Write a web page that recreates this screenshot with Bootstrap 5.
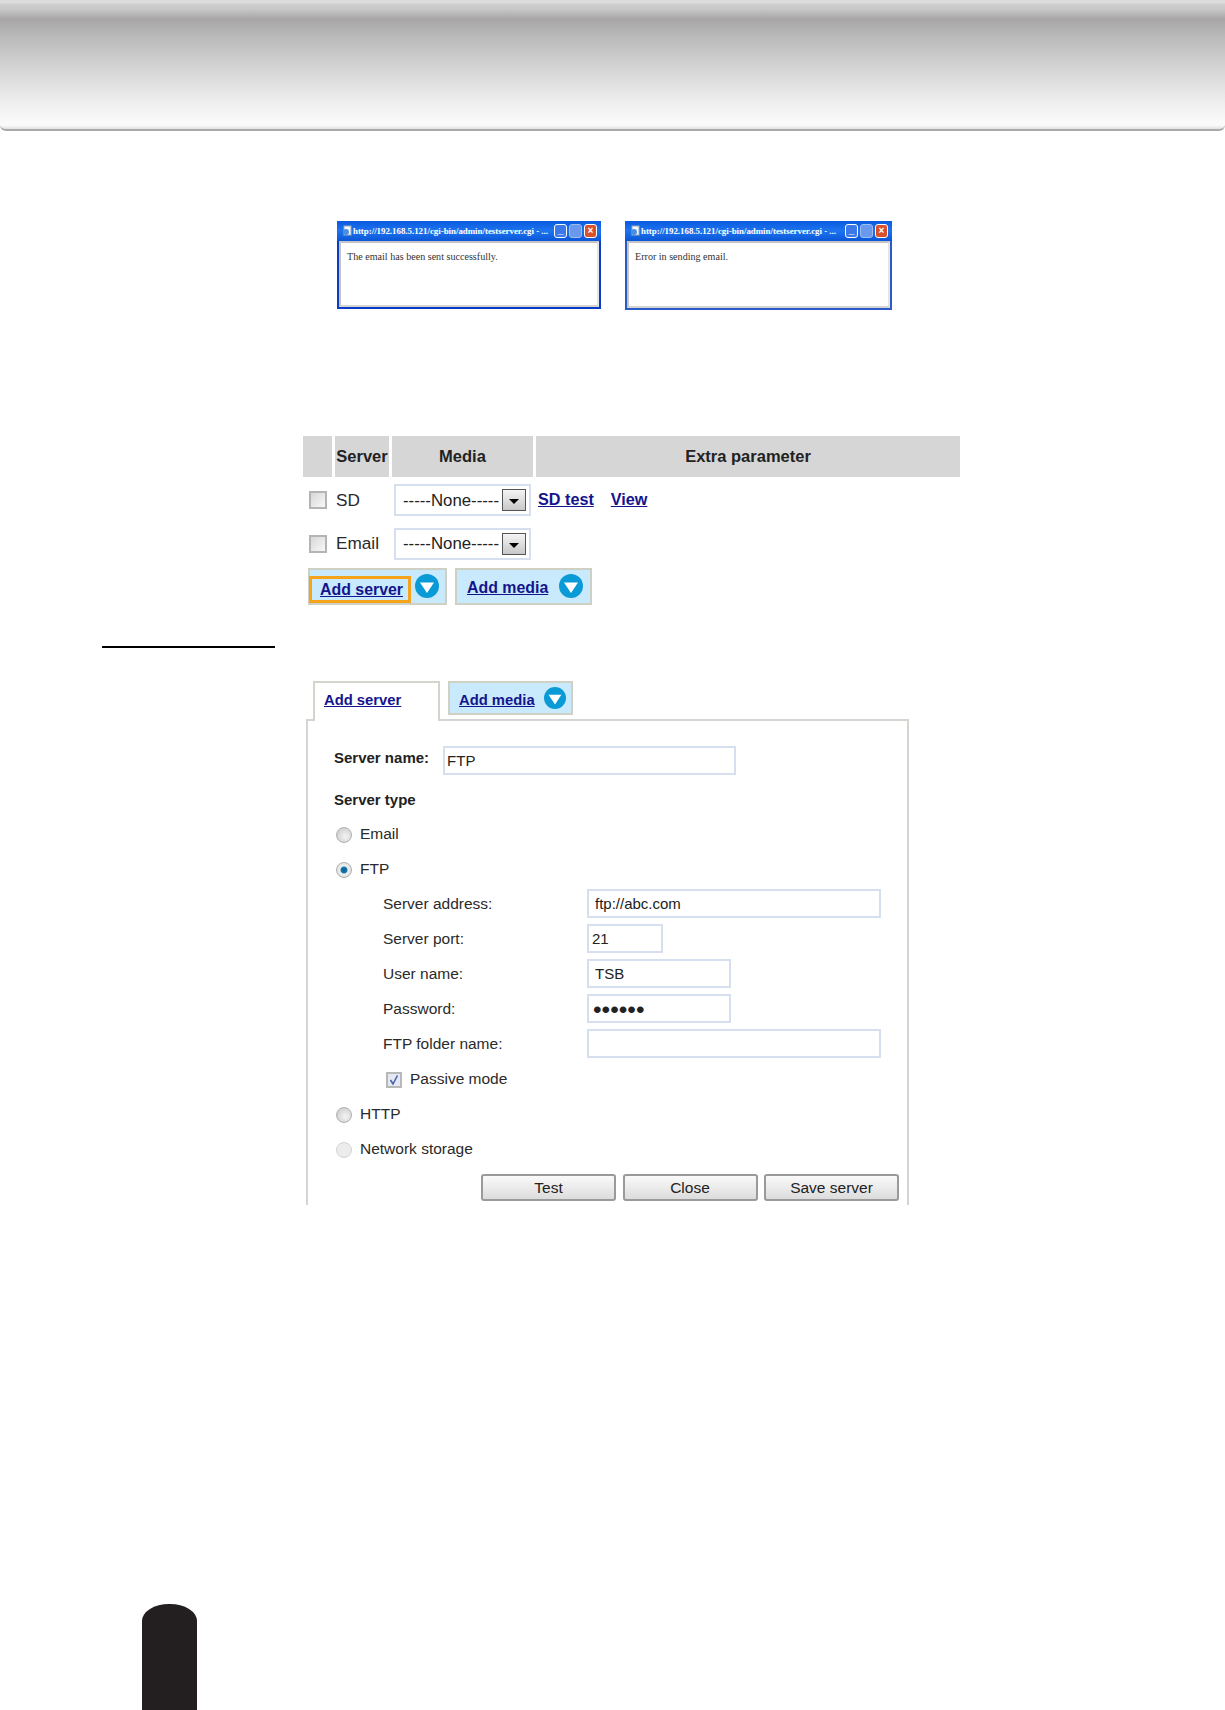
<!DOCTYPE html>
<html lang="en"><head><meta charset="utf-8"><title>Server settings</title>
<link rel="stylesheet" href="https://cdn.jsdelivr.net/npm/bootstrap@5.3.0/dist/css/bootstrap.min.css">
<style>
html,body{height:1710px;overflow:hidden}
body{font-family:"Liberation Sans",Arial,sans-serif;font-size:15.5px;color:#2a2a2a;background:#fff;position:relative;line-height:1.2}
.topband{height:131px;border-bottom:2px solid #a9a9a9;border-radius:0 0 6px 6px;background:linear-gradient(#dcdcdc 0,#dcdcdc 3px,#cfcfcf 4px,#c8c8c8 9px,#a8a6a6 19px,#bdbdbd 40px,#d6d6d6 70px,#f0f0f0 105px,#fbfbfb 125px,#e8e8e8 128px,#cfcfcf 131px)}
.popups{margin:90px 0 0 337px;gap:24px}
.popwin{border:2px solid #0a3cc8;border-top:0;background:#fff;flex:none;display:flex;flex-direction:column}
.popwin-a{width:264px;height:88px}
.popwin-b{width:267px;height:89px;border-color:#2a5ac8}
.poptitle{height:20px;flex:none;background:linear-gradient(#0a5ae0,#1e74ee 50%,#0a55d8);color:#fff;font:bold 8.85px "Liberation Serif",serif;padding:0 4px 0 16px;white-space:nowrap;position:relative;margin:0 -2px}
.pagetitle{flex:1 1 auto;min-width:0;overflow:hidden}
.pageglyph{position:absolute;left:5px;top:4px;width:11px;height:11px}
.winbtn{width:13px;height:14px;border:1px solid #fff;border-radius:3px;background:#3c78e8;flex:none;font:bold 10px/10px "Liberation Sans",sans-serif;color:#fff;text-align:center;margin-left:2px}
.winbtn-x{background:#d8502c;line-height:12px}
.winbtn-dim{background:#6a98ec;border-color:#9dbcf0}
.popbody{flex:1 1 auto;font:10.1px/12px "Liberation Serif",serif;color:#333;padding:8px 6px;border:2px solid #c4c4c4;border-right-color:#e4e4e4;border-bottom-color:#d4d4d4}
.grid-head{gap:3px;height:41px;margin:126px 0 0 303px;width:657px}
.grid-head>div{background:#d6d6d6;font-weight:700;color:#222;display:flex;align-items:center;justify-content:center;font-size:16.5px}
.gh1{width:29px}.gh2{width:54px}.gh3{width:141px}.gh4{width:424px}
.grid-row{margin-left:306px;align-items:center}
.row-sd{height:32px;margin-top:7px}
.row-em{height:31px;margin-top:12px}
.tickbox{appearance:none;width:18px;height:18px;border:2px solid #b4b4b4;background:linear-gradient(135deg,#d8d8d8,#f8f8f8);margin:0 0 0 3px;flex:none;display:block}
.srv-name{width:58px;margin-left:9px;font-size:17.2px}
.selbox{width:137px;height:32px;border:2px solid #d6dfee;padding:0 3px 0 7px;font-size:16.8px;color:#222}
.seltext{margin-top:2px}
.selbtn{width:24px;height:22px;border:1px solid #555;background:linear-gradient(#f4f4f4,#c8c8c8);display:flex;align-items:center;justify-content:center;flex:none}
.selbtn i{display:block;width:0;height:0;border:5px solid transparent;border-top:5px solid #000;border-bottom:0;margin-top:3px}
.blink{color:#14148c;font-weight:700;text-decoration:underline;font-size:16.2px;white-space:nowrap}
.blink-g1{margin-left:7px}.blink-g2{margin-left:17px}
.addrow{margin:9px 0 0 308px;gap:8px;height:37px}
.addrow .blink{font-size:15.9px;margin-top:3px}
.addbtn{background:#c9eafd;border:2px solid #cfd0c4;height:37px;display:flex;align-items:center;flex:none}
.add-a{width:139px}
.add-b{width:137px;padding-left:10px}
.focusring{width:102px;height:27px;margin-left:-1px;border:3px solid #f5a31a;display:flex;align-items:center;padding-left:8px;align-self:flex-end}
.focusring .blink{margin-top:0}
.circ{width:24px;height:24px;flex:none;margin-top:-1px}
.add-a .circ{margin-left:4px}
.add-b .circ{margin-left:11px}
.blackrule{height:2px;width:173px;background:#000;margin:41px 0 0 102px;border:0;opacity:1}
.tabstrip{margin:33px 0 0 313px;height:38px;gap:8px;align-items:flex-start;position:relative;z-index:1}
.tab-on{width:127px;height:40px;background:#fff;border:2px solid #d4d4cc;border-bottom:0;padding:8px 0 0 9px;flex:none}
.tab-off{width:125px;height:34px;background:#c9eafd;border:2px solid #d0d0c4;display:flex;align-items:center;padding-left:9px;flex:none}
.tab-off .tablink{margin-top:5px}
.tab-off .circ{width:22px;height:22px;margin-left:9px;margin-top:0}
.tablink{color:#14148c;font-weight:700;text-decoration:underline;font-size:14.8px;white-space:nowrap}
.panelbox{margin-left:306px;width:603px;height:486px;border:2px solid #d4d4d0;border-bottom:0;padding:0 8px 0 26px}
.lbl-b{font-weight:700;color:#222;font-size:15px}
.name-row{height:28px;margin-top:25px}
.name-row .lbl-b{margin-top:-5px}
.txtin{border:2px solid #d6dfee;border-radius:0;height:29px;padding:0 6px;font:15px "Liberation Sans",sans-serif;color:#222;background:#fff;outline:0;display:block;margin-top:-2px}
.name-row .txtin{width:293px;margin-left:14px;padding-left:2px;margin-top:0}
.pw-in{font-size:24.5px;padding:3px 0 0 4px}
.type-head{height:34px;margin-top:9px;display:flex;align-items:center}
.line35{height:35px;display:flex;align-items:center}
.dot{appearance:none;width:16px;height:16px;border-radius:50%;border:1px solid #b0b0b0;background:radial-gradient(circle at 60% 60%,#f4f4f4,#c4c4c4);margin:0 8px 0 2px;flex:none;display:block}
.dot:checked{background:radial-gradient(circle,#0a5a8c 0,#1a7ab0 3px,#f0f0f0 4px,#d0d0d0 100%)}
.dot-pale{border-color:#d4d4d4;background:#ececec}
.field-lbl{width:204px;margin-left:49px;flex:none}
.w-full{width:294px}.w-port{width:76px;padding-left:3px!important}.w-mid{width:144px}
.pm-row{padding-left:52px}
.pm-tick{width:16px;height:16px;border:2px solid #b8b8b8;background:#e4e8f2;margin-right:8px;flex:none;display:flex}
.pm-tick svg{display:block}
.foot-row{justify-content:flex-end;gap:6.5px;margin-top:7px}
.plainbtn{width:135px;height:27px;border:2px solid #9a9a9a;border-radius:3px;background:linear-gradient(#fafafa,#dcdcdc);font:15.5px "Liberation Sans",sans-serif;color:#222;padding:0;line-height:23px}
.pagetab{position:absolute;left:142px;top:1604px;width:55px;height:106px;background:#231f20;border-radius:27px 27px 0 0/17px 17px 0 0}
</style></head>
<body>
<div class="topband"></div>

<div class="popups d-flex">
  <div class="popwin popwin-a">
    <div class="poptitle d-flex align-items-center">
      <svg class="pageglyph" viewBox="0 0 11 11"><rect x="2" y="1" width="7" height="9" fill="#f4f8ff" stroke="#9ab"/><circle cx="4" cy="7" r="3" fill="#4a90e0"/></svg>
      <span class="pagetitle">http://192.168.5.121/cgi-bin/admin/testserver.cgi - ...</span>
      <span class="winbtn">_</span><span class="winbtn winbtn-dim"></span><span class="winbtn winbtn-x">×</span>
    </div>
    <div class="popbody">The email has been sent successfully.</div>
  </div>
  <div class="popwin popwin-b">
    <div class="poptitle d-flex align-items-center">
      <svg class="pageglyph" viewBox="0 0 11 11"><rect x="2" y="1" width="7" height="9" fill="#f4f8ff" stroke="#9ab"/><circle cx="4" cy="7" r="3" fill="#4a90e0"/></svg>
      <span class="pagetitle">http://192.168.5.121/cgi-bin/admin/testserver.cgi - ...</span>
      <span class="winbtn">_</span><span class="winbtn winbtn-dim"></span><span class="winbtn winbtn-x">×</span>
    </div>
    <div class="popbody">Error in sending email.</div>
  </div>
</div>

<div class="grid-head d-flex">
  <div class="gh1"></div><div class="gh2">Server</div><div class="gh3">Media</div><div class="gh4">Extra parameter</div>
</div>
<div class="grid-row row-sd d-flex">
  <input type="checkbox" class="tickbox" aria-label="SD"><span class="srv-name">SD</span>
  <div class="selbox d-flex align-items-center justify-content-between"><span class="seltext">-----None-----</span><span class="selbtn"><i></i></span></div>
  <a class="blink blink-g1" href="#">SD test</a><a class="blink blink-g2" href="#">View</a>
</div>
<div class="grid-row row-em d-flex">
  <input type="checkbox" class="tickbox" aria-label="Email"><span class="srv-name">Email</span>
  <div class="selbox d-flex align-items-center justify-content-between"><span class="seltext">-----None-----</span><span class="selbtn"><i></i></span></div>
</div>
<div class="addrow d-flex">
  <div class="addbtn add-a"><span class="focusring"><a class="blink" href="#">Add server</a></span>
    <svg class="circ" viewBox="0 0 24 24"><circle cx="12" cy="12" r="12" fill="#0a9ad6"/><path d="M5 8.5h14L12 19z" fill="#fff"/></svg></div>
  <div class="addbtn add-b"><a class="blink" href="#">Add media</a>
    <svg class="circ" viewBox="0 0 24 24"><circle cx="12" cy="12" r="12" fill="#0a9ad6"/><path d="M5 8.5h14L12 19z" fill="#fff"/></svg></div>
</div>

<hr class="blackrule">

<div class="tabstrip d-flex">
  <div class="tab-on"><a class="tablink" href="#">Add server</a></div>
  <div class="tab-off"><a class="tablink" href="#">Add media</a>
    <svg class="circ" viewBox="0 0 24 24"><circle cx="12" cy="12" r="12" fill="#0a9ad6"/><path d="M5 8.5h14L12 19z" fill="#fff"/></svg></div>
</div>
<div class="panelbox">
  <div class="name-row d-flex align-items-center"><span class="lbl-b">Server name:</span><input class="txtin" value="FTP" aria-label="Server name"></div>
  <div class="type-head lbl-b">Server type</div>
  <div class="line35"><input type="radio" name="st" class="dot" aria-label="Email"><span>Email</span></div>
  <div class="line35"><input type="radio" name="st" class="dot" checked aria-label="FTP"><span>FTP</span></div>
  <div class="line35"><span class="field-lbl">Server address:</span><input class="txtin w-full" value="ftp://abc.com" aria-label="Server address"></div>
  <div class="line35"><span class="field-lbl">Server port:</span><input class="txtin w-port" value="21" aria-label="Server port"></div>
  <div class="line35"><span class="field-lbl">User name:</span><input class="txtin w-mid" value="TSB" aria-label="User name"></div>
  <div class="line35"><span class="field-lbl">Password:</span><input class="txtin w-mid pw-in" type="password" value="abcdef" aria-label="Password"></div>
  <div class="line35"><span class="field-lbl">FTP folder name:</span><input class="txtin w-full" aria-label="FTP folder name"></div>
  <div class="line35 pm-row"><span class="pm-tick"><svg width="12" height="12" viewBox="0 0 12 12"><path d="M2.5 6l2.5 4L9.5 1.5" fill="none" stroke="#4a62a8" stroke-width="1.6"/></svg></span><span>Passive mode</span></div>
  <div class="line35"><input type="radio" name="st" class="dot" aria-label="HTTP"><span>HTTP</span></div>
  <div class="line35"><input type="radio" name="st" class="dot dot-pale" aria-label="Network storage"><span>Network storage</span></div>
  <div class="foot-row d-flex"><button class="plainbtn" type="button">Test</button><button class="plainbtn" type="button">Close</button><button class="plainbtn" type="button">Save server</button></div>
</div>

<div class="pagetab"></div>
<script src="https://cdn.jsdelivr.net/npm/bootstrap@5.3.0/dist/js/bootstrap.bundle.min.js"></script>
</body></html>
